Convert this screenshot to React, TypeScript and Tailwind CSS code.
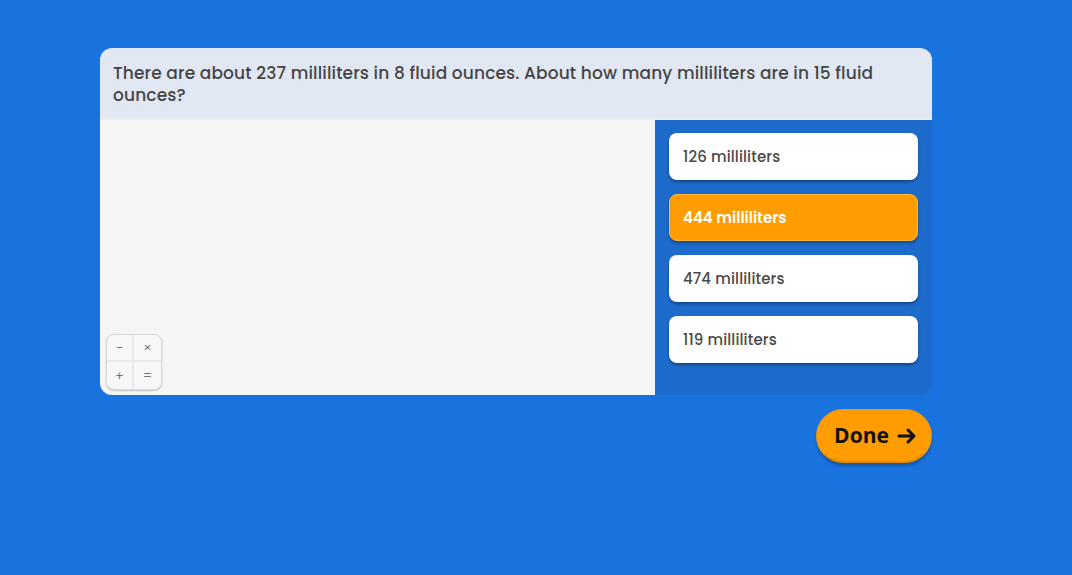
import React from "react";

const options = [
  { label: "126 milliliters", selected: false },
  { label: "444 milliliters", selected: true },
  { label: "474 milliliters", selected: false },
  { label: "119 milliliters", selected: false },
];

export default function App() {
  return (
    <div
      className="w-[1072px] h-[575px] bg-[#1973df] flex flex-col items-start pl-[100px] pt-[48px]"
      style={{ fontFamily: "Poppins, 'Open Sans', sans-serif" }}
    >
      <div className="w-[832px] flex flex-col">
        <div className="rounded-[12px] overflow-hidden flex flex-col">
          <div className="bg-[#e1e8f4] h-[72px] px-[13px] pt-[14px] border-b-2 border-[#ebeef2]">
            <p className="text-[17px] leading-[22px] font-medium text-[#454545] tracking-[0.13px]">
              There are about 237 milliliters in 8 fluid ounces. About how many milliliters are in 15 fluid ounces?
            </p>
          </div>
          <div className="flex h-[275px]">
            <div className="w-[555px] bg-[#f5f5f5] relative">
              <div className="absolute left-[6px] bottom-[5px] w-[56px] h-[56px] rounded-[8px] bg-[#f7f7f7] border border-[#d8d8d8] shadow-[0_1px_2px_rgba(0,0,0,0.2)] grid grid-cols-2 grid-rows-2 text-[#777] text-[13px] leading-none">
                <div className="flex items-center justify-center border-r-2 border-b-2 border-[#e6ebf2]">−</div>
                <div className="flex items-center justify-center border-b-2 border-[#e6ebf2]">×</div>
                <div className="flex items-center justify-center border-r-2 border-[#e6ebf2]">+</div>
                <div className="flex items-center justify-center">=</div>
              </div>
            </div>
            <div className="flex-1 bg-[#1d6bcb] px-[14px] pt-[13px] flex flex-col gap-[14px]">
              {options.map((o) => (
                <div
                  key={o.label}
                  className={
                    o.selected
                      ? "h-[47px] rounded-[8px] bg-[#ff9d00] border border-[#ffb640] flex items-center px-[13px] pt-[2px] text-[15px] font-semibold text-white shadow-[0_2px_3px_rgba(0,0,0,0.3)]"
                      : "h-[47px] rounded-[8px] bg-white flex items-center px-[14px] pt-[2px] text-[15px] font-medium tracking-[0.13px] text-[#4a4a4a] shadow-[0_2px_3px_rgba(0,0,0,0.35)]"
                  }
                >
                  {o.label}
                </div>
              ))}
            </div>
          </div>
        </div>
        <div className="flex justify-end mt-[14px]">
          <div className="w-[116px] h-[54px] rounded-full bg-[#ff9d00] border-2 border-[#f59a0a] border-b-[#e08a00] shadow-[0_3px_3px_rgba(0,0,0,0.25)] flex items-center justify-center pl-[3px] gap-[8px] text-[#111]">
            <span className="text-[21px] font-bold" style={{ fontFamily: "'Open Sans', sans-serif" }}>
              Done
            </span>
            <svg width="20" height="18" viewBox="0 0 20 18" fill="none" stroke="#111" strokeWidth="3" strokeLinecap="round" strokeLinejoin="round">
              <path d="M2 9h15M11 3l6 6-6 6" />
            </svg>
          </div>
        </div>
      </div>
    </div>
  );
}
